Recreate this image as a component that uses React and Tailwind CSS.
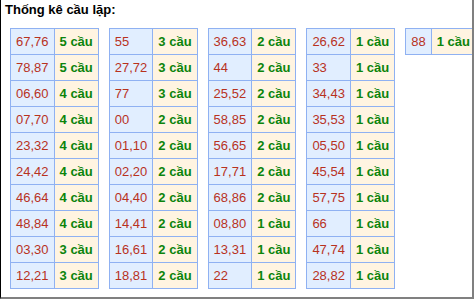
const groups = [
  [["67,76", 5], ["78,87", 5], ["06,60", 4], ["07,70", 4], ["23,32", 4], ["24,42", 4], ["46,64", 4], ["48,84", 4], ["03,30", 3], ["12,21", 3]],
  [["55", 3], ["27,72", 3], ["77", 3], ["00", 2], ["01,10", 2], ["02,20", 2], ["04,40", 2], ["14,41", 2], ["16,61", 2], ["18,81", 2]],
  [["36,63", 2], ["44", 2], ["25,52", 2], ["58,85", 2], ["56,65", 2], ["17,71", 2], ["68,86", 2], ["08,80", 1], ["13,31", 1], ["22", 1]],
  [["26,62", 1], ["33", 1], ["34,43", 1], ["35,53", 1], ["05,50", 1], ["45,54", 1], ["57,75", 1], ["66", 1], ["47,74", 1], ["28,82", 1]],
  [["88", 1]],
];

function CauTable({ rows }) {
  return (
    <table className="border-collapse shrink-0">
      <tbody>
        {rows.map(([pair, n]) => (
          <tr key={pair}>
            <td className="border border-[#8fb1f2] bg-[#e1eeff] text-[#b8321e] px-[5px] py-[5px] leading-[15px] whitespace-nowrap">
              {pair}
            </td>
            <td className="border border-[#8fb1f2] bg-[#fff4e1] text-[#0c840c] font-bold px-[5px] py-[5px] leading-[15px] whitespace-nowrap">
              {n} cầu
            </td>
          </tr>
        ))}
      </tbody>
    </table>
  );
}

export default function App() {
  return (
    <div
      className="w-[474px] h-[299px] overflow-hidden bg-white border-l border-black border-r-2 border-b-2 border-r-[#808080] border-b-[#808080] text-[13px]"
      style={{ fontFamily: '"Liberation Sans", Arial, sans-serif' }}
    >
      <div className="pl-[4px] pt-[2px] font-bold text-black leading-[15px]">Thống kê cầu lặp:</div>
      <div className="flex items-start gap-[10px] ml-[9px] mt-[11px]">
        {groups.map((rows, i) => (
          <CauTable key={i} rows={rows} />
        ))}
      </div>
    </div>
  );
}
